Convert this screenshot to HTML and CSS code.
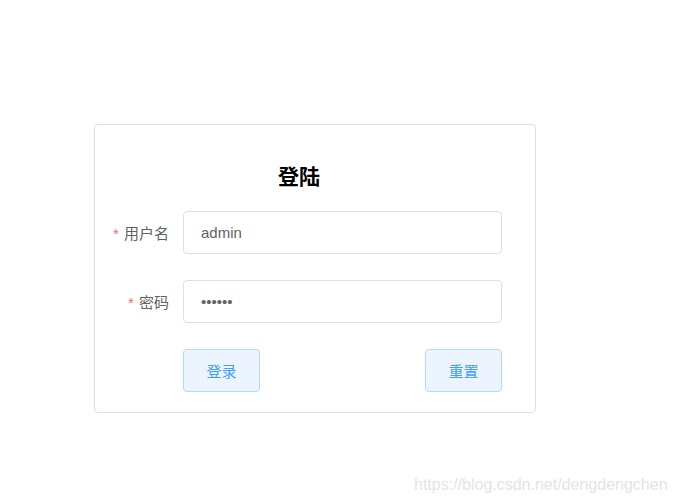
FILE: index.html
```html
<!DOCTYPE html>
<html lang="zh">
<head>
<meta charset="utf-8">
<title>登陆</title>
<link rel="stylesheet" href="styles.css">
</head>
<body>
<div class="card">
  <h3 class="title">登陆</h3>
  <form class="form">
    <div class="row">
      <label class="label"><span class="req">*</span> 用户名</label>
      <input class="input" type="text" value="admin">
    </div>
    <div class="row">
      <label class="label"><span class="req">*</span> 密码</label>
      <input class="input" type="password" value="123456">
    </div>
    <div class="row actions">
      <button type="button" class="btn">登录</button>
      <button type="button" class="btn">重置</button>
    </div>
  </form>
</div>
<div class="watermark">https://blog.csdn.net/dengdengchen</div>
</body>
</html>
```
FILE: styles.css
```css
html, body {
  margin: 0;
  padding: 0;
  background: #fff;
  font-family: "Liberation Sans", "Noto Sans CJK SC", sans-serif;
}
body {
  position: relative;
  width: 674px;
  height: 503px;
  overflow: hidden;
}
.card {
  margin: 124px 0 0 94px;
  width: 440px;
  height: 247px;
  border: 1px solid #dcdfe6;
  border-radius: 4px;
  padding-top: 40px;
  box-sizing: content-box;
}
.title {
  margin: 0 0 22px 0;
  width: 408px;
  text-align: center;
  font-size: 21px;
  line-height: 24px;
  font-weight: bold;
  color: #000;
}
.form {
  display: flex;
  flex-direction: column;
  gap: 26px;
}
.row {
  display: flex;
  align-items: center;
  height: 43px;
}
.label {
  width: 88px;
  box-sizing: border-box;
  padding-right: 14px;
  text-align: right;
  font-size: 15px;
  color: #606266;
}
.req {
  color: #f56c6c;
  margin-right: 1px;
}
.input {
  width: 319px;
  height: 43px;
  box-sizing: border-box;
  border: 1px solid #dcdfe6;
  border-radius: 4px;
  padding: 0 17px;
  font-family: "Liberation Sans", "Noto Sans CJK SC", sans-serif;
  font-size: 15px;
  color: #606266;
  background: #fff;
  outline: none;
}
.actions {
  padding-left: 88px;
  width: 319px;
  justify-content: space-between;
}
.btn {
  width: 77px;
  height: 43px;
  border: 1px solid #b3d8ff;
  background: #ecf5ff;
  color: #409eff;
  border-radius: 4px;
  font-family: "Liberation Sans", "Noto Sans CJK SC", sans-serif;
  font-size: 15px;
  padding: 0;
  cursor: pointer;
}
.watermark {
  position: absolute;
  left: 414px;
  top: 476px;
  font-size: 16px;
  line-height: 18px;
  color: #e4e4e4;
  white-space: nowrap;
}
```
